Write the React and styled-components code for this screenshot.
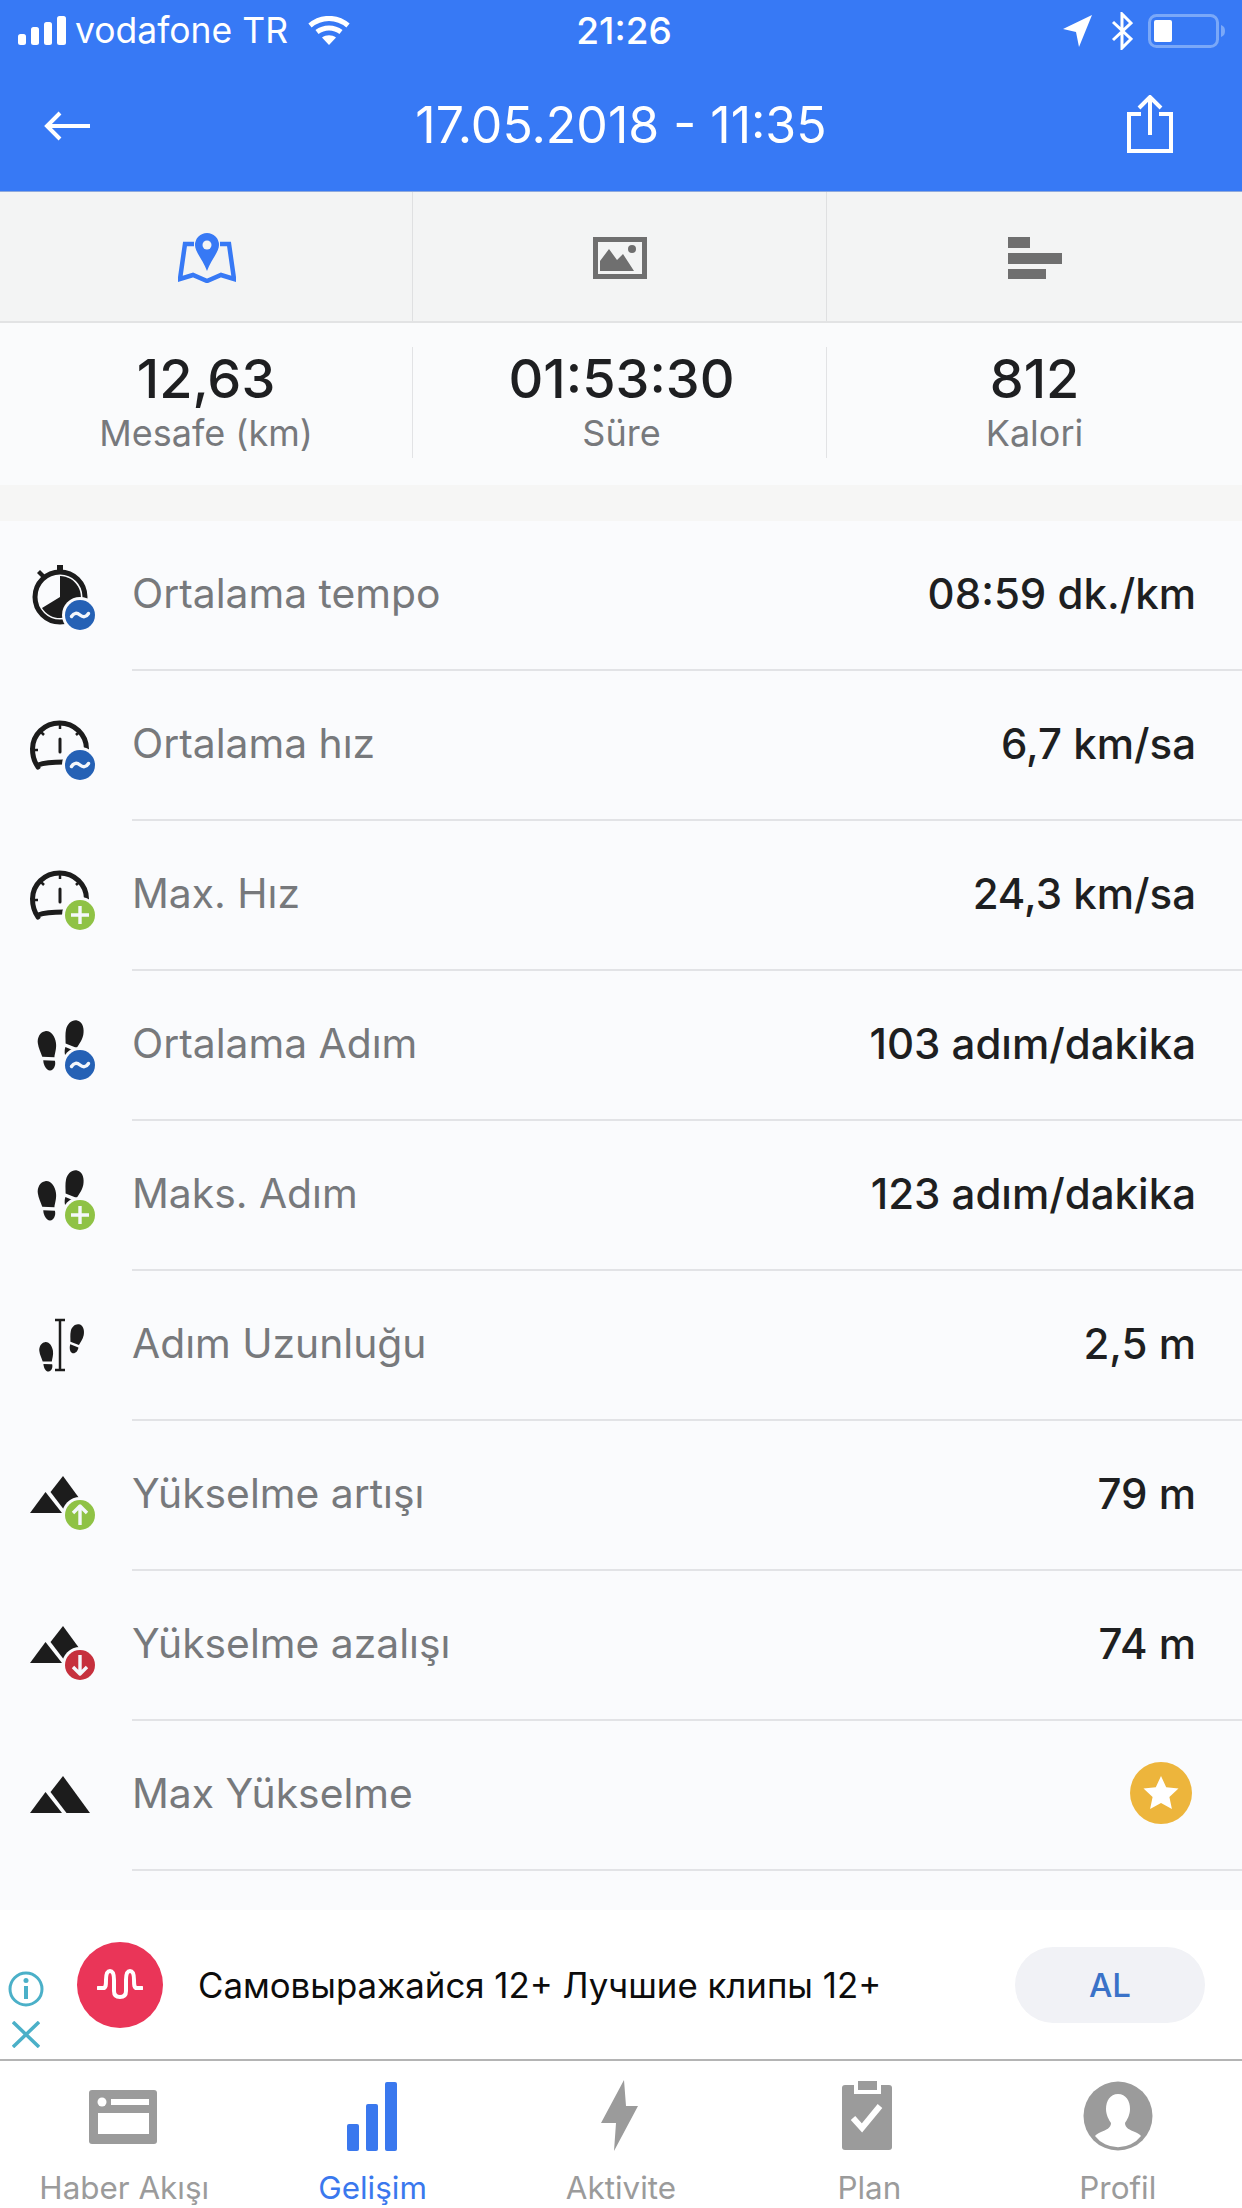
import React from 'react'
import styled, { createGlobalStyle } from 'styled-components'

const Global = createGlobalStyle`
  html, body {
    margin: 0;
    padding: 0;
    background: #fafbfd;
    overflow: hidden;
  }
  * {
    box-sizing: border-box;
  }
  body {
    font-family: Inter, 'Noto Sans', 'Liberation Sans', sans-serif;
  }
`
const Page = styled.div`
  width: 1242px;
  height: 2208px;
  display: flex;
  flex-direction: column;
  overflow: hidden;
`
const Top = styled.header`
  height: 192px;
  background: #3779f5;
  color: #fff;
  border-bottom: 1px solid #8fa9dc;
`
const StatusBar = styled.div`
  height: 60px;
  padding: 1px 18px 0;
  display: flex;
  align-items: center;
  position: relative;
`
const Carrier = styled.span`
  font-size: 35.5px;
  line-height: 60px;
  margin: 0 20px 0 9px;
`
const Clock = styled.span`
  position: absolute;
  left: 6px;
  right: 0;
  text-align: center;
  font-size: 37px;
  font-weight: 500;
  line-height: 60px;
`
const StatusRight = styled.div`
  margin-left: auto;
  display: flex;
  align-items: center;
  gap: 15px;
  margin-right: -2px;
`
const NavRow = styled.div`
  height: 131px;
  padding: 0 69px 0 44px;
  display: flex;
  align-items: center;
  justify-content: space-between;
  position: relative;
`
const Title = styled.h1`
  position: absolute;
  left: 0;
  right: 0;
  margin: 0 0 2px;
  text-align: center;
  font-size: 50px;
  font-weight: 400;
  line-height: 60px;
`
const Tabs = styled.div`
  height: 131px;
  flex: none;
  display: grid;
  grid-template-columns: 412px 414px 416px;
  background: #f3f4f4;
  border-bottom: 2px solid #e2e3e4;
`
const Tab = styled.div`
  display: flex;
  align-items: center;
  justify-content: center;
  padding-top: 2px;
  padding-left: ${(p) => (p.$first ? '2px' : '0')};
  border-left: ${(p) => (p.$first ? 'none' : '1px solid #dfe0e1')};
`
const Stats = styled.div`
  height: 162px;
  flex: none;
  display: grid;
  grid-template-columns: 412px 414px 416px;
  padding: 24px 0 30px;
  background: #fafbfc;
`
const Stat = styled.div`
  padding-top: 2px;
  padding-left: ${(p) => p.$shift || 0}px;
  display: flex;
  flex-direction: column;
  align-items: center;
  border-left: ${(p) => (p.$first ? 'none' : '1px solid #e2e3e5')};
`
const StatValue = styled.div`
  font-size: 54px;
  font-weight: 500;
  line-height: 60px;
  color: #1e1f21;
`
const StatLabel = styled.div`
  font-size: 36px;
  line-height: 49px;
  color: #77797c;
`
const Band = styled.div`
  height: 36px;
  flex: none;
  background: #f6f6f5;
`
const List = styled.div`
  height: 1389px;
  flex: none;
  background: #fafbfd;
`
const Row = styled.div`
  height: 150px;
  padding-left: 28px;
  display: flex;
  align-items: center;
`
const RowIcon = styled.svg`
  width: 72px;
  height: 72px;
  flex: none;
  overflow: visible;
`
const RowBody = styled.div`
  height: 150px;
  flex: 1;
  margin-left: 32px;
  padding: 0 46px 4px 0;
  display: flex;
  align-items: center;
  justify-content: space-between;
  border-bottom: 2px solid #e2e3e6;
`
const RowLabel = styled.span`
  font-size: 40.8px;
  color: #77797c;
`
const RowValue = styled.span`
  font-size: 42px;
  font-weight: 450;
  color: #1e1f21;
`
const Ad = styled.div`
  height: 149px;
  flex: none;
  background: #fff;
  display: flex;
  align-items: center;
  position: relative;
`
const AdMarks = styled.div`
  width: 52px;
  margin-top: 50px;
  display: flex;
  flex-direction: column;
  align-items: center;
  gap: 14px;
`
const AdLogo = styled.div`
  width: 86px;
  height: 86px;
  flex: none;
  margin-left: 25px;
  border-radius: 50%;
  background: #ea3558;
  display: flex;
  align-items: center;
  justify-content: center;
`
const AdText = styled.div`
  margin-left: 35px;
  font-size: 34.8px;
  color: #0c0c0c;
`
const AdButton = styled.div`
  width: 190px;
  height: 76px;
  margin: 0 37px 0 auto;
  border-radius: 38px;
  background: #f1f2f6;
  color: #3a72c8;
  font-size: 33px;
  font-weight: 500;
  display: flex;
  align-items: center;
  justify-content: center;
`
const BottomBar = styled.nav`
  flex: 1;
  display: grid;
  grid-template-columns: repeat(5, 1fr);
  background: #fff;
  border-top: 2px solid #b4b4b4;
`
const BottomItem = styled.div`
  display: flex;
  flex-direction: column;
  align-items: center;
  padding-top: 22px;
  color: ${(p) => (p.$active ? '#3a78ee' : '#9b9b9b')};
`
const BottomIcon = styled.svg`
  width: 72px;
  height: 72px;
  flex: none;
  overflow: visible;
`
const BottomLabel = styled.span`
  margin-top: 15px;
  font-size: 31.4px;
  line-height: 36px;
  white-space: nowrap;
`

const Badge = ({ kind }) => {
  const fill = { avg: '#2561b5', plus: '#8fc245', up: '#8fc245', down: '#c6303d' }[kind]
  return (
    <g>
      <circle cx='52' cy='55' r='18' fill='#fafbfd' />
      <circle cx='52' cy='55' r='15' fill={fill} />
      <g stroke='#f4f7fb' strokeWidth='3.4' fill='none' strokeLinecap='round' strokeLinejoin='round'>
        {kind === 'avg' && <path d='M43.500 56.500c2.500-4 5.500-4 8.500-1.500s6 2.500 8.500-1.500' />}
        {kind === 'plus' && <path d='M52 46v18M43 55h18' strokeLinecap='butt' />}
        {kind === 'up' && <path d='M52 65V47M45 53l7-7 7 7' strokeLinecap='butt' />}
        {kind === 'down' && <path d='M52 45v18M45 57l7 7 7-7' strokeLinecap='butt' />}
      </g>
    </g>
  )
}

const Stopwatch = () => (
  <g fill='#1c1c1c'>
    <rect x='29' y='5' width='6' height='6' />
    <path d='M9 13l3-3 5 5-3 3z' />
    <circle cx='32' cy='37' r='25' fill='none' stroke='#1c1c1c' strokeWidth='5' />
    <path d='M32 37V16A21 21 0 1 1 14 48z' />
  </g>
)

const Gauge = () => (
  <g fill='none' stroke='#1c1c1c'>
    <path d='M10 57C5 50 4.500 45 4.500 39a27 26 0 0 1 54 0M10 55c8-3 16-3 26-3' strokeWidth='5' strokeLinecap='round' />
    <path d='M32 14v5M13 22l3 3M51 22l-3 3M5 40h5' strokeWidth='2.500' />
    <path d='M32 29v13' strokeWidth='3' strokeLinecap='round' />
  </g>
)

const Shoe = ({ x, y, scale = 1, rotate = 0 }) => (
  <g transform={`translate(${x} ${y}) rotate(${rotate}) scale(${scale})`} fill='#1c1c1c'>
    <path d='M0-20C6-20 9-13 9-7 9-1 6.500 3 5.500 7L-6.500 5C-7.500 0-9-4-9-9-9-15-5-20 0-20z' />
    <path d='M-6 8.500L5.500 10.500C6 15.500 3 19.500 -.5 19.500-4 19.500-6.500 14-6 8.500z' />
  </g>
)

const Feet = () => (
  <g>
    <Shoe x={20} y={41} rotate={-8} />
    <Shoe x={45} y={30} rotate={12} />
  </g>
)

const Stride = () => (
  <g>
    <Shoe x={19} y={47} scale={0.75} rotate={-8} />
    <Shoe x={48} y={29} scale={0.75} rotate={12} />
    <path d='M27 10h10M32 10v50M27 60h10' stroke='#1c1c1c' strokeWidth='2.500' fill='none' />
  </g>
)

const Peaks = () => (
  <g fill='#1c1c1c'>
    <path d='M35 16L62 53H38.500L22.500 32z' />
    <path d='M2 53L17.500 32 34 53z' />
  </g>
)

const rows = [
  { label: 'Ortalama tempo', value: '08:59 dk./km', glyph: <Stopwatch />, badge: 'avg' },
  { label: 'Ortalama hız', value: '6,7 km/sa', glyph: <Gauge />, badge: 'avg' },
  { label: 'Max. Hız', value: '24,3 km/sa', glyph: <Gauge />, badge: 'plus' },
  { label: 'Ortalama Adım', value: '103 adım/dakika', glyph: <Feet />, badge: 'avg' },
  { label: 'Maks. Adım', value: '123 adım/dakika', glyph: <Feet />, badge: 'plus' },
  { label: 'Adım Uzunluğu', value: '2,5 m', glyph: <Stride /> },
  { label: 'Yükselme artışı', value: '79 m', glyph: <Peaks />, badge: 'up' },
  { label: 'Yükselme azalışı', value: '74 m', glyph: <Peaks />, badge: 'down' },
  { label: 'Max Yükselme', star: true, glyph: <Peaks /> },
]

const stats = [
  { value: '12,63', label: 'Mesafe (km)' },
  { value: '01:53:30', label: 'Süre', shift: 4 },
  { value: '812', label: 'Kalori' },
]

const GoldStar = () => (
  <svg width='62' height='62' viewBox='0 0 62 62' style={{ marginRight: 4 }}>
    <circle cx='31' cy='31' r='31' fill='#edb53c' />
    <path d='M31 14l5.200 11.200 12.300 1.400-9.100 8.300 2.500 12.100L31 41l-10.900 6 2.500-12.100-9.100-8.300 12.300-1.400z' fill='#fff' />
  </svg>
)

const bottom = [
  {
    label: 'Haber Akışı',
    icon: (
      <g>
        <rect x='1' y='7' width='68' height='54' rx='3' fill='currentColor' />
        <rect x='23' y='16' width='38' height='6' fill='#fff' />
        <circle cx='14' cy='19' r='4.500' fill='#fff' />
        <rect x='10' y='30' width='51' height='21' fill='#fff' />
      </g>
    ),
  },
  {
    label: 'Gelişim',
    active: true,
    icon: (
      <g fill='currentColor'>
        <rect x='10' y='41' width='12' height='27' rx='2' />
        <rect x='29' y='21' width='12' height='47' rx='2' />
        <rect x='48' y='-1' width='12' height='69' rx='2' />
      </g>
    ),
  },
  {
    label: 'Aktivite',
    icon: <path d='M39-3L16 40h15l-2 28 24-45H41z' fill='currentColor' />,
  },
  {
    label: 'Plan',
    icon: (
      <g>
        <path
          d='M12 2h44a3 3 0 0 1 3 3v59a3 3 0 0 1-3 3H12a3 3 0 0 1-3-3V5a3 3 0 0 1 3-3z'
          fill='currentColor'
        />
        <rect x='21' y='0' width='27' height='11' fill='#fff' />
        <rect x='25' y='-2' width='19' height='9' fill='currentColor' />
        <path d='M20 35l9 10 18-22' fill='none' stroke='#fff' strokeWidth='6' />
      </g>
    ),
  },
  {
    label: 'Profil',
    icon: (
      <g>
        <circle cx='36' cy='33' r='34.500' fill='currentColor' />
        <path
          d='M36 11c8 0 12 7 12 15 0 6-3 11-5 14 0 5 5 7 10 9 3 1 5 3 6 4a29 29 0 0 1-46 0c1-1 3-3 6-4 5-2 10-4 10-9-2-3-5-8-5-14 0-8 4-15 12-15z'
          fill='#fff'
        />
      </g>
    ),
  },
]

const App = () => {
  return (
    <Page>
      <Global />
      <Top>
        <StatusBar>
          <svg width='48' height='30' viewBox='0 0 48 30' fill='#fff'>
            <rect x='0' y='18' width='8' height='11' rx='2.500' />
            <rect x='13' y='11' width='8' height='18' rx='2.500' />
            <rect x='26' y='6' width='8' height='23' rx='2.500' />
            <rect x='39' y='0' width='9' height='29' rx='2.500' />
          </svg>
          <Carrier>vodafone TR</Carrier>
          <svg width='42' height='30' viewBox='0 0 42 30' fill='none' stroke='#fff' strokeWidth='5'>
            <path d='M2 9.500c11-9.500 27-9.500 38 0M9 16c7-5.500 17-5.500 24 0' />
            <path d='M14 21.500c4-3 10-3 14 0L21 29z' fill='#fff' stroke='none' />
          </svg>
          <Clock>21:26</Clock>
          <StatusRight>
            <svg width='30' height='32' viewBox='0 0 30 32' fill='#fff' style={{ marginRight: 3 }}>
              <path d='M29 0L0 14l13 3 3 15z' />
            </svg>
            <svg width='22' height='38' viewBox='0 0 22 38' fill='none' stroke='#fff' strokeWidth='3'>
              <path d='M2 10l18 17-9 9V2l9 9L2 28' />
            </svg>
            <svg width='78' height='34' viewBox='0 0 78 34'>
              <rect x='1.500' y='1.500' width='68' height='31' rx='7' fill='none' stroke='#7aa8f8' strokeWidth='3' />
              <rect x='6' y='6' width='18' height='22' rx='2' fill='#fff' />
              <path d='M73 11c3 1 4 3 4 6s-1 5-4 6z' fill='#7aa8f8' />
            </svg>
          </StatusRight>
        </StatusBar>
        <NavRow>
          <svg width='46' height='30' viewBox='0 0 46 30' fill='none' stroke='#fff' strokeWidth='4'>
            <path d='M46 15H3M16 2L3 15l13 13' />
          </svg>
          <Title>17.05.2018 - 11:35</Title>
          <svg width='46' height='58' viewBox='0 0 46 58' fill='none' stroke='#fff' strokeWidth='4' style={{ marginBottom: 4 }}>
            <path d='M14 19H2v37h42V19H32M23 40V3M12 13L23 2l11 11' />
          </svg>
        </NavRow>
      </Top>
      <Tabs>
        <Tab $first>
          <svg width='58' height='50' viewBox='0 0 58 50' fill='none' stroke='#3779f5' strokeWidth='4.500'>
            <path d='M16 11H7L2 46l13-4 14 6 14-6 13 4-5-35h-9' />
            <path d='M29 0a12 12 0 0 1 12 12c0 7-8 15-12 26-4-11-12-19-12-26A12 12 0 0 1 29 0z' fill='#3779f5' stroke='none' />
            <circle cx='29' cy='12' r='4.500' fill='#f3f4f4' stroke='none' />
          </svg>
        </Tab>
        <Tab>
          <svg width='54' height='42' viewBox='0 0 54 42'>
            <rect width='54' height='42' fill='#6f6f6f' />
            <rect x='5' y='5' width='44' height='32' fill='#f3f4f4' />
            <path d='M7 34V24l9-12 8 11 6-6 11 17z' fill='#6f6f6f' />
            <ellipse cx='39' cy='12' rx='4' ry='4' fill='#6f6f6f' />
          </svg>
        </Tab>
        <Tab>
          <svg width='54' height='42' viewBox='0 0 54 42' fill='#6f6f6f'>
            <rect x='0' y='0' width='22' height='11' />
            <rect x='0' y='16' width='54' height='11' />
            <rect x='0' y='32' width='38' height='10' />
          </svg>
        </Tab>
      </Tabs>
      <Stats>
        {stats.map((stat, i) => (
          <Stat key={stat.label} $first={i === 0} $shift={stat.shift}>
            <StatValue>{stat.value}</StatValue>
            <StatLabel>{stat.label}</StatLabel>
          </Stat>
        ))}
      </Stats>
      <Band />
      <List>
        {rows.map((row) => (
          <Row key={row.label}>
            <RowIcon viewBox='0 0 72 72'>
              {row.glyph}
              {row.badge && <Badge kind={row.badge} />}
            </RowIcon>
            <RowBody>
              <RowLabel>{row.label}</RowLabel>
              {row.star ? <GoldStar /> : <RowValue>{row.value}</RowValue>}
            </RowBody>
          </Row>
        ))}
      </List>
      <Ad>
        <AdMarks>
          <svg width='36' height='36' viewBox='0 0 36 36' fill='none' stroke='#4bb0c8' strokeWidth='3'>
            <circle cx='18' cy='18' r='16' />
            <path d='M18 15v13' strokeWidth='4' />
            <circle cx='18' cy='9.500' r='2.500' fill='#4bb0c8' stroke='none' />
          </svg>
          <svg width='28' height='27' viewBox='0 0 28 27' fill='none' stroke='#4bb0c8' strokeWidth='3.500'>
            <path d='M1 1l26 25M27 1L1 26' />
          </svg>
        </AdMarks>
        <AdLogo>
          <svg width='46' height='32' viewBox='0 0 46 32' fill='none' stroke='#fff' strokeWidth='4' strokeLinecap='round' strokeLinejoin='round'>
            <path d='M1 19h5c3 0 3-3 3-8s1-9 4-9 4 4 4 9v11c0 4 2 6 6 6s6-2 6-6V11c0-5 1-9 4-9s4 4 4 9 0 8 3 8h5' />
          </svg>
        </AdLogo>
        <AdText>Самовыражайся 12+ Лучшие клипы 12+</AdText>
        <AdButton>AL</AdButton>
      </Ad>
      <BottomBar>
        {bottom.map((item) => (
          <BottomItem key={item.label} $active={item.active}>
            <BottomIcon viewBox='0 0 72 72'>{item.icon}</BottomIcon>
            <BottomLabel>{item.label}</BottomLabel>
          </BottomItem>
        ))}
      </BottomBar>
    </Page>
  )
}

export default App
